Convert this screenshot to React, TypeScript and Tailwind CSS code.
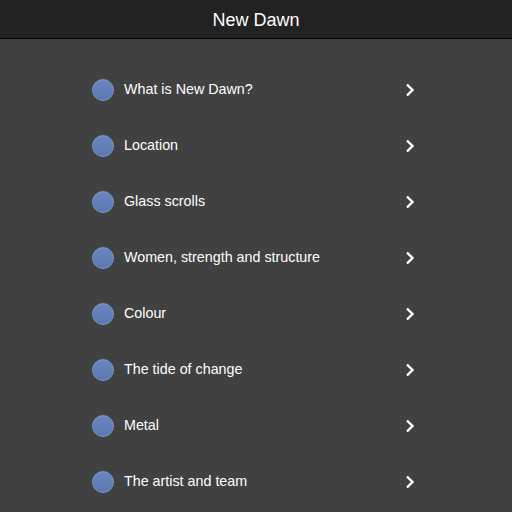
const items = [
  'What is New Dawn?',
  'Location',
  'Glass scrolls',
  'Women, strength and structure',
  'Colour',
  'The tide of change',
  'Metal',
  'The artist and team',
];

function Chevron() {
  return (
    <svg width="10" height="14" viewBox="0 0 10 14" className="block">
      <path d="M2 1.5 L7.5 7 L2 12.5" fill="none" stroke="white" strokeWidth="2.4" />
    </svg>
  );
}

export default function App() {
  return (
    <div className="w-[512px] h-[512px] overflow-hidden bg-[#414141] font-['Liberation_Sans',Arial,sans-serif] text-white">
      {/* Header */}
      <div className="h-[39px] bg-[#222222] border-b border-black flex items-center justify-center">
        <h1 className="text-[18px] leading-none mt-[2px]">New Dawn</h1>
      </div>

      {/* Menu list */}
      <div className="pt-[23px] pl-[92px] pr-[97px]">
        {items.map((label) => (
          <div key={label} className="h-[56px] flex items-center">
            <div className="w-[22px] h-[22px] rounded-full bg-gradient-to-b from-[#6a88c0] to-[#5a78b0] border border-[#7d96c4] shrink-0" />
            <span className="ml-[10px] text-[14.3px] flex-1">{label}</span>
            <Chevron />
          </div>
        ))}
      </div>
    </div>
  );
}
